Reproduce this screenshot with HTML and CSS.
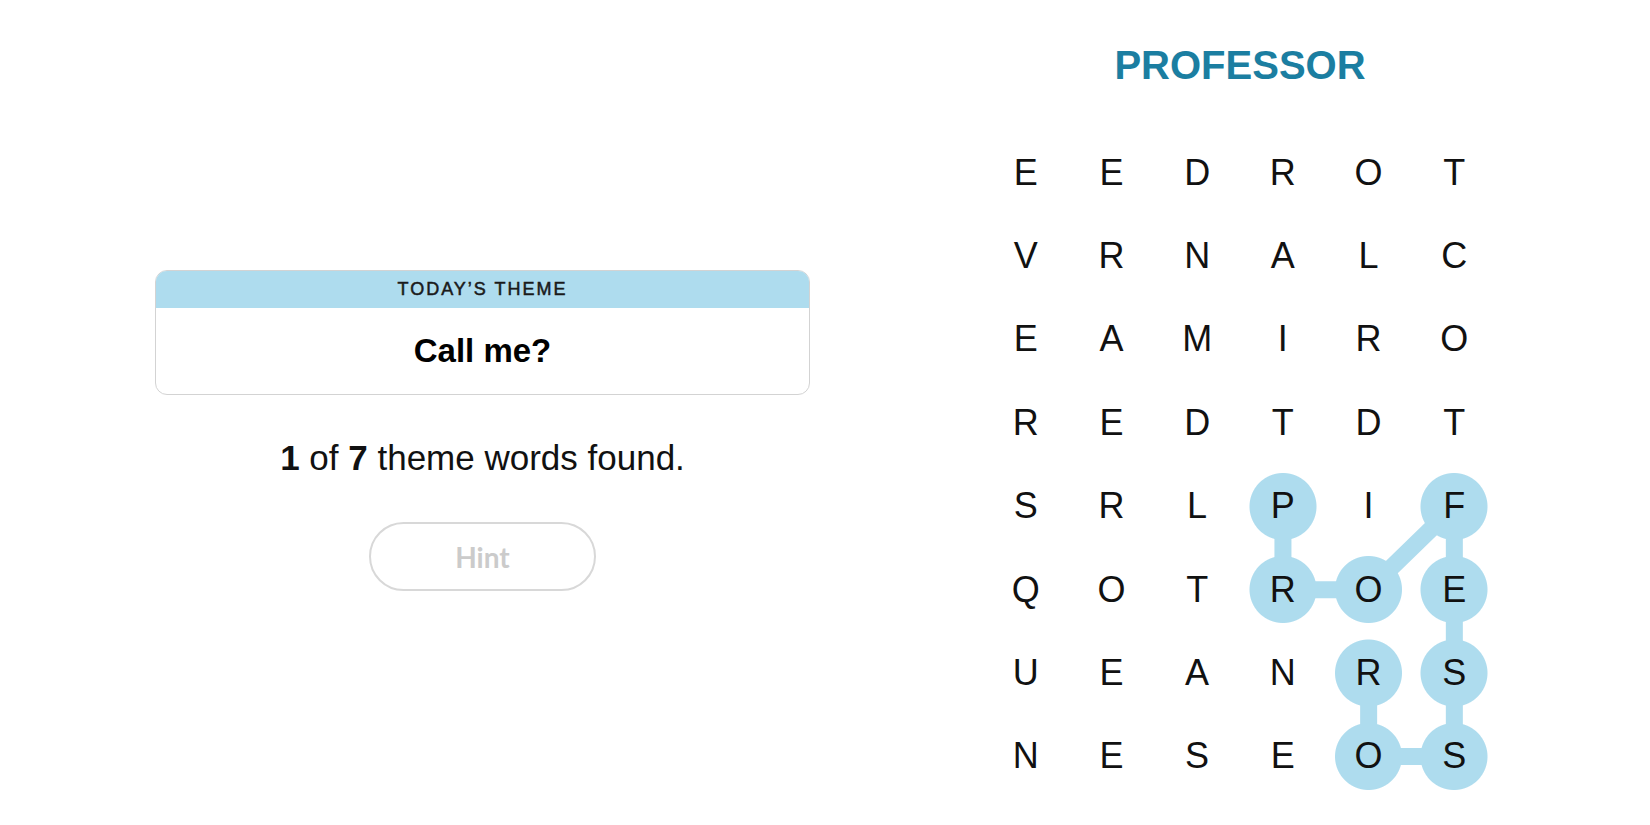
FILE: index.html
```html
<!DOCTYPE html>
<html lang="en">
<head>
<meta charset="utf-8">
<title>Strands</title>
<link rel="stylesheet" href="styles.css">
</head>
<body>
<main class="game">
  <section class="info">
    <div class="theme-card">
      <div class="theme-head">TODAY’S THEME</div>
      <div class="theme-body">Call me?</div>
    </div>
    <p class="progress"><b>1</b> of <b>7</b> theme words found.</p>
    <button class="hint" type="button">Hint</button>
  </section>
  <section class="board">
    <h1 class="word">PROFESSOR</h1>
    <div class="grid-wrap">
      <svg class="links" viewBox="0 0 514.2 667.2" width="514.2" height="667.2" aria-hidden="true">
        <polyline points="299.95,375.3 299.95,458.7 385.65,458.7 471.35,375.3 471.35,458.7 471.35,542.1 471.35,625.5 385.65,625.5 385.65,542.1" fill="none" stroke="#aedcee" stroke-width="17" stroke-linejoin="round"/>
      </svg>
      <div class="grid">
        <span class="cell">E</span><span class="cell">E</span><span class="cell">D</span><span class="cell">R</span><span class="cell">O</span><span class="cell">T</span>
        <span class="cell">V</span><span class="cell">R</span><span class="cell">N</span><span class="cell">A</span><span class="cell">L</span><span class="cell">C</span>
        <span class="cell">E</span><span class="cell">A</span><span class="cell">M</span><span class="cell">I</span><span class="cell">R</span><span class="cell">O</span>
        <span class="cell">R</span><span class="cell">E</span><span class="cell">D</span><span class="cell">T</span><span class="cell">D</span><span class="cell">T</span>
        <span class="cell">S</span><span class="cell">R</span><span class="cell">L</span><span class="cell on">P</span><span class="cell">I</span><span class="cell on">F</span>
        <span class="cell">Q</span><span class="cell">O</span><span class="cell">T</span><span class="cell on">R</span><span class="cell on">O</span><span class="cell on">E</span>
        <span class="cell">U</span><span class="cell">E</span><span class="cell">A</span><span class="cell">N</span><span class="cell on">R</span><span class="cell on">S</span>
        <span class="cell">N</span><span class="cell">E</span><span class="cell">S</span><span class="cell">E</span><span class="cell on">O</span><span class="cell on">S</span>
      </div>
    </div>
  </section>
</main>
</body>
</html>
```

FILE: styles.css
```css
html, body {
  margin: 0;
  padding: 0;
  background: #fff;
}

body {
  font-family: "Liberation Sans", Arial, sans-serif;
  color: #000;
  width: 1650px;
  height: 825px;
  overflow: hidden;
}

.game {
  display: flex;
  align-items: flex-start;
}

.info {
  flex: 0 0 965px;
  display: flex;
  flex-direction: column;
  align-items: center;
  padding-top: 270px;
}

.theme-card {
  width: 653px;
  border: 1px solid #d3d3d3;
  border-radius: 12px;
  overflow: hidden;
}

.theme-head {
  height: 37px;
  background: #aedcee;
  display: flex;
  align-items: center;
  justify-content: center;
  font-size: 18px;
  font-weight: 400;
  letter-spacing: 2px;
  color: #1a1a1a;
  -webkit-text-stroke: 0.5px #1a1a1a;
}

.theme-body {
  height: 86px;
  display: flex;
  align-items: center;
  justify-content: center;
  font-size: 33px;
  font-weight: 700;
}

.progress {
  margin: 43px 0 0;
  font-size: 35px;
  line-height: 40px;
  color: #111;
}

.progress b {
  font-weight: 700;
}

.hint {
  margin-top: 44px;
  width: 227px;
  height: 69px;
  border: 2px solid #d8d8d8;
  border-radius: 35px;
  background: #fff;
  font-family: Lato, "Liberation Sans", sans-serif;
  font-weight: 700;
  font-size: 28px;
  color: #cbcbcb;
  padding: 0;
}

.board {
  flex: 0 0 550px;
  display: flex;
  flex-direction: column;
  align-items: center;
  padding-top: 41px;
}

.word {
  margin: 0;
  font-size: 40px;
  line-height: 48px;
  font-weight: 700;
  color: #1b7ea1;
}

.grid-wrap {
  position: relative;
  margin-top: 42px;
  width: 514.2px;
  height: 667.2px;
}

.links {
  position: absolute;
  left: 0;
  top: 0;
}

.grid {
  position: relative;
  display: grid;
  grid-template-columns: repeat(6, 85.7px);
  grid-template-rows: repeat(8, 83.4px);
}

.cell {
  display: flex;
  align-items: center;
  justify-content: center;
  font-size: 36px;
  color: #111;
}

.cell.on {
  background: radial-gradient(circle at center, #aedcee 0, #aedcee 33px, transparent 34px);
}
```
